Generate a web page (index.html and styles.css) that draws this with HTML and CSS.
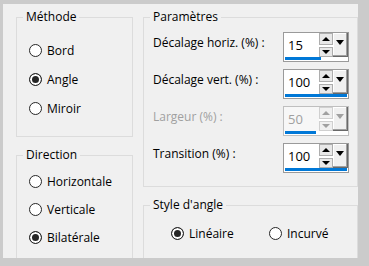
FILE: index.html
```html
<!DOCTYPE html>
<html lang="fr">
<head>
    <meta charset="UTF-8">
    <title>Angle</title>
    <link rel="stylesheet" href="styles.css">
</head>
<body>
    <div class="dialogue">
        <div class="colonne">
            <fieldset class="groupe methode">
                <legend>Méthode</legend>
                <label class="radio"><input type="radio" name="methode"> Bord</label>
                <label class="radio"><input type="radio" name="methode" checked> Angle</label>
                <label class="radio"><input type="radio" name="methode"> Miroir</label>
            </fieldset>

            <fieldset class="groupe direction">
                <legend>Direction</legend>
                <label class="radio"><input type="radio" name="direction"> Horizontale</label>
                <label class="radio"><input type="radio" name="direction"> Verticale</label>
                <label class="radio"><input type="radio" name="direction" checked> Bilatérale</label>
            </fieldset>
        </div>

        <div class="colonne">
            <fieldset class="groupe parametres">
                <legend>Paramètres</legend>

                <div class="ligne">
                    <span class="libelle">Décalage horiz. (%) :</span>
                    <div class="spin">
                        <div class="spin-haut">
                            <span class="valeur">15</span>
                            <span class="fleches"><span class="haut"></span><span class="bas"></span></span>
                            <span class="menu"></span>
                        </div>
                        <span class="barre" style="width: 36px"></span>
                    </div>
                </div>

                <div class="ligne">
                    <span class="libelle">Décalage vert. (%) :</span>
                    <div class="spin">
                        <div class="spin-haut">
                            <span class="valeur">100</span>
                            <span class="fleches"><span class="haut"></span><span class="bas"></span></span>
                            <span class="menu"></span>
                        </div>
                        <span class="barre" style="width: 62px"></span>
                    </div>
                </div>

                <!-- désactivé -->
                <div class="ligne inactif">
                    <span class="libelle">Largeur (%) :</span>
                    <div class="spin">
                        <div class="spin-haut">
                            <span class="valeur">50</span>
                            <span class="fleches"><span class="haut"></span><span class="bas"></span></span>
                            <span class="menu"></span>
                        </div>
                        <span class="barre" style="width: 31px"></span>
                    </div>
                </div>

                <div class="ligne">
                    <span class="libelle">Transition (%) :</span>
                    <div class="spin">
                        <div class="spin-haut">
                            <span class="valeur">100</span>
                            <span class="fleches"><span class="haut"></span><span class="bas"></span></span>
                            <span class="menu"></span>
                        </div>
                        <span class="barre" style="width: 62px"></span>
                    </div>
                </div>
            </fieldset>

            <fieldset class="groupe style-angle">
                <legend>Style d'angle</legend>
                <div class="choix">
                    <label class="radio"><input type="radio" name="style" checked> Linéaire</label>
                    <label class="radio"><input type="radio" name="style"> Incurvé</label>
                </div>
            </fieldset>
        </div>
    </div>
</body>
</html>
```

FILE: styles.css
```css
/* Fond gris autour de la boîte de dialogue */
body {
    margin: 0;
    background: #cbcbcb;
    font-family: 'Open Sans', 'Noto Sans', sans-serif;
    font-size: 12px;
    color: #000;
}

.dialogue {
    margin: 4px 0 0 3px;
    width: 355px;
    height: 254px;
    box-sizing: border-box;
    padding: 5px 0 0 13px;
    background: #f0f0f0;
    overflow: hidden;
    display: grid;
    grid-template-columns: 117px 215px;
    column-gap: 10px;
    align-items: start;
}

.colonne {
    display: flex;
    flex-direction: column;
    gap: 10px;
}

.groupe {
    margin: 0;
    min-width: 0;
    border: 1px solid #dcdcdc;
}

.groupe legend {
    margin-left: 6px;
    padding: 0 3px;
    line-height: 16px;
}

.methode {
    padding: 11px 0 13px 0;
}

.direction {
    padding: 4px 0 12px 0;
}

.methode .radio {
    height: 29px;
}

.direction .radio {
    height: 28px;
}

.radio {
    display: flex;
    align-items: center;
    padding-left: 12px;
    height: 28px;
}

.radio input {
    appearance: none;
    -webkit-appearance: none;
    width: 13px;
    height: 13px;
    margin: 0 5px 0 0;
    border: 1px solid #262626;
    border-radius: 50%;
    background: #fff;
    box-sizing: border-box;
}

.radio input:checked {
    background: #262626;
    box-shadow: inset 0 0 0 2px #fff;
}

/* Paramètres */
.parametres {
    padding: 7px 0 13px 0;
    display: flex;
    flex-direction: column;
    gap: 7px;
}

.ligne {
    display: flex;
    align-items: flex-start;
    padding: 0 8px 0 9px;
}

.libelle {
    padding-top: 3px;
    line-height: 16px;
}

.spin {
    margin-left: auto;
    width: 66px;
    height: 30px;
    box-sizing: border-box;
    border: 1px solid #9a9a9a;
    background: #fff;
    display: flex;
    flex-direction: column;
}

.spin-haut {
    display: flex;
    height: 24px;
}

.valeur {
    flex: 1;
    padding-left: 4px;
    line-height: 24px;
    font-size: 13px;
}

.fleches {
    width: 14px;
    display: flex;
    flex-direction: column;
    gap: 2px;
}

.fleches span {
    box-sizing: border-box;
    border: 1px solid #adadad;
    background: #e8e8e8;
    display: flex;
    align-items: center;
    justify-content: center;
}

.fleches .haut {
    height: 12px;
}

.fleches .bas {
    height: 10px;
}

.fleches .haut::after {
    content: "";
    border-left: 4px solid transparent;
    border-right: 4px solid transparent;
    border-bottom: 4px solid #000;
}

.fleches .bas::after {
    content: "";
    border-left: 4px solid transparent;
    border-right: 4px solid transparent;
    border-top: 4px solid #000;
}

.menu {
    width: 15px;
    box-sizing: border-box;
    border-right: 1px solid #696969;
    border-bottom: 1px solid #696969;
    box-shadow: inset -1px -1px 0 #a0a0a0, inset 1px 1px 0 #fff;
    background: #f0f0f0;
    display: flex;
    justify-content: center;
    padding-top: 7px;
}

.menu::after {
    content: "";
    height: 0;
    border-left: 4px solid transparent;
    border-right: 4px solid transparent;
    border-top: 5px solid #000;
}

.barre {
    display: block;
    height: 3px;
    margin: 0 0 0 1px;
    background: #0078d7;
}

.inactif .libelle,
.inactif .valeur {
    color: #a0a0a0;
}

.inactif .spin {
    border-color: #bfbfbf;
}

.inactif .valeur {
    background: #f7f7f7;
}

.inactif .fleches span {
    border-color: #d0d0d0;
    background: #f0f0f0;
}

.inactif .fleches .haut::after {
    border-bottom-color: #a0a0a0;
}

.inactif .fleches .bas::after,
.inactif .menu::after {
    border-top-color: #a0a0a0;
}

/* Style d'angle */
.style-angle {
    padding: 6px 0 20px 0;
}

.choix {
    display: grid;
    grid-template-columns: 98px auto;
    padding-left: 15px;
}
```
